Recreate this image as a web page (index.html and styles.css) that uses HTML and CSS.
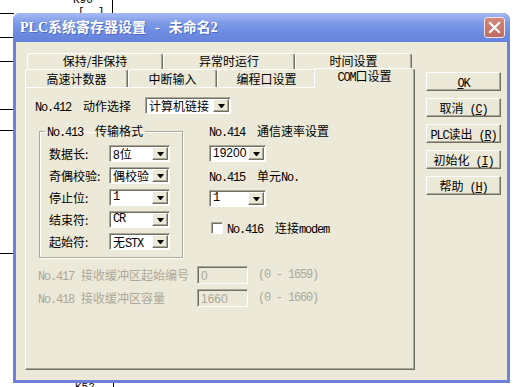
FILE: index.html
```html
<!DOCTYPE html>
<html lang="zh-CN">
<head>
    <meta charset="UTF-8">
    <meta name="viewport" content="width=device-width, initial-scale=1.0">
    <title>PLC系统寄存器设置</title>
    <link rel="stylesheet" href="styles.css">
</head>
<body>
    <!-- 背后的梯形图 -->
    <div class="ladder">
        <span class="k k90">K90</span>
        <span class="k brk">[&nbsp;&nbsp;]</span>
        <i class="hl h1"></i>
        <i class="hl h2"></i>
        <i class="hl h3"></i>
        <i class="hl h4"></i>
        <i class="hl h5"></i>
        <i class="hl h6"></i>
        <i class="vl v1"></i>
        <i class="vl v2"></i>
        <span class="k k52">K52</span>
    </div>

    <div class="dlg">
        <div class="caption">
            <span class="caption-text">PLC系统寄存器设置<span class="dash">-</span>未命名2</span>
            <span class="close">
                <svg width="13" height="13" viewBox="0 0 13 13">
                    <path d="M2 2 L11 11 M11 2 L2 11" stroke="#fff" stroke-width="2.2" stroke-linecap="square"/>
                </svg>
            </span>
        </div>

        <div class="client">
            <div class="tabctl">
                <div class="tabrow back">
                    <div class="tab t1">保持/非保持</div>
                    <div class="tab t2">异常时运行</div>
                    <div class="tab t3">时间设置</div>
                </div>
                <div class="tabrow front">
                    <div class="tab t4">高速计数器</div>
                    <div class="tab t5">中断输入</div>
                    <div class="tab t6">编程口设置</div>
                    <div class="tab t7 sel"><span class="lt">COM</span>口设置</div>
                </div>

                <div class="panel">
                    <div class="line412">
                        <span class="cap"><span class="lt no">No.412</span>动作选择</span>
                        <div class="combo w86"><span class="val">计算机链接</span><b class="arr"></b></div>
                    </div>

                    <div class="mid">
                        <fieldset class="grp">
                            <legend><span class="lt no">No.413</span>传输格式</legend>
                            <div class="frow"><span class="flbl">数据长:</span><div class="combo w61"><span class="val"><span class="sn">8</span>位</span><b class="arr"></b></div></div>
                            <div class="frow"><span class="flbl">奇偶校验:</span><div class="combo w61"><span class="val">偶校验</span><b class="arr"></b></div></div>
                            <div class="frow"><span class="flbl">停止位:</span><div class="combo w61"><span class="val lt">1</span><b class="arr"></b></div></div>
                            <div class="frow"><span class="flbl">结束符:</span><div class="combo w61"><span class="val lt">CR</span><b class="arr"></b></div></div>
                            <div class="frow"><span class="flbl">起始符:</span><div class="combo w61"><span class="val">无<span class="lt">STX</span></span><b class="arr"></b></div></div>
                        </fieldset>

                        <div class="rcol">
                            <div class="rlbl"><span class="lt no">No.414</span>通信速率设置</div>
                            <div class="combo w57"><span class="val sn">19200</span><b class="arr"></b></div>
                            <div class="rlbl"><span class="lt no">No.415</span>单元<span class="lt">No.</span></div>
                            <div class="combo w57"><span class="val lt">1</span><b class="arr"></b></div>
                            <div class="chk"><span class="box"></span><span class="ct"><span class="lt no">No.416</span>连接<span class="lt">modem</span></span></div>
                        </div>
                    </div>

                    <div class="drow first">
                        <span class="dlbl"><span class="lt no sm">No.417</span>接收缓冲区起始编号</span>
                        <span class="tbox"><span class="sn">0</span></span>
                        <span class="rng lt">(0 - 1659)</span>
                    </div>
                    <div class="drow">
                        <span class="dlbl"><span class="lt no sm">No.418</span>接收缓冲区容量</span>
                        <span class="tbox"><span class="sn">1660</span></span>
                        <span class="rng lt">(0 - 1660)</span>
                    </div>
                </div>
            </div>

            <div class="buttons">
                <div class="btn"><span class="lt"><u>O</u>K</span></div>
                <div class="btn">取消<span class="lt">&nbsp;(<u>C</u>)</span></div>
                <div class="btn"><span class="lt">PLC</span>读出<span class="lt">&nbsp;(<u>R</u>)</span></div>
                <div class="btn">初始化<span class="lt">&nbsp;(<u>I</u>)</span></div>
                <div class="btn">帮助<span class="lt">&nbsp;(<u>H</u>)</span></div>
            </div>
        </div>
    </div>
</body>
</html>
```

FILE: styles.css
```css
body{
    margin: 0;
    width: 529px;
    height: 387px;
    position: relative;
    overflow: hidden;
    background: #fff;
    font: 12px "Noto Sans CJK SC", sans-serif;
    line-height: 14px;
    color: #000;
}

/* 西文字母：宋体半角的宽度 6px，行高压小免得撑高行框 */
.lt{
    font-family: "Liberation Mono", monospace;
    font-size: 12px;
    letter-spacing: -1.2px;
    line-height: 10px;
}
.sn{
    font-family: "Liberation Sans", sans-serif;
    font-size: 12px;
    line-height: 10px;
}
.no{
    margin-right: 12px;
}
.no.sm{
    margin-right: 7px;
}

/* 梯形图 */
.ladder .hl{
    position: absolute;
    left: 0;
    width: 14px;
    height: 1px;
    background: #000;
}
.h1{ top: 13px; }
.h2{ top: 37px; }
.h3{ top: 61px; }
.h4{ top: 109px; }
.h5{ top: 130px; }
.h6{ top: 253px; }
.ladder .vl{
    position: absolute;
    width: 1px;
    background: #000;
}
.v1{ left: 112px; top: 0; height: 14px; }
.v2{ left: 113px; top: 383px; height: 4px; }
.ladder .k{
    position: absolute;
    font-family: "Liberation Mono", monospace;
    font-size: 11px;
    line-height: 11px;
}
.k90{ left: 73px; top: -5px; }
.brk{ left: 78px; top: 7px; }
.k52{ left: 75px; top: 382px; }

/* 对话框 */
.dlg{
    position: absolute;
    left: 13px;
    top: 13px;
    width: 497px;
    height: 370px;
    background: #6E80D9;
    border-radius: 7px 7px 0 0;
    display: flex;
    flex-direction: column;
}
.caption{
    height: 29px;
    border-radius: 7px 7px 0 0;
    background: linear-gradient(#A6BBF2, #7D99E7 35%, #6C8AE0 70%, #6682DC);
    display: flex;
    align-items: center;
    justify-content: space-between;
    padding: 0 5px 0 7px;
    color: #fff;
}
.caption-text{
    font-family: "Liberation Serif", "Noto Sans CJK SC", serif;
    font-weight: bold;
    font-size: 14px;
    text-shadow: 1px 1px 0 #4F68C0;
}
.dash{
    margin: 0 9px;
}
.close{
    width: 19px;
    height: 19px;
    border: 1px solid #F2E4E4;
    border-radius: 3px;
    background: linear-gradient(#D48A7E, #C06A60);
    display: flex;
    align-items: center;
    justify-content: center;
}

.client{
    flex: 1;
    margin: 0 3px 3px;
    background: #ECE9D8;
    display: flex;
    padding: 11px 6px 10px 9px;
    gap: 11px;
}

/* 标签页 */
.tabctl{
    width: 390px;
    display: flex;
    flex-direction: column;
}
.tabrow{
    display: flex;
}
.tabrow.back{
    height: 16px;
    padding-left: 2px;
}
.tabrow.front{
    height: 18px;
}
.tab{
    box-sizing: border-box;
    border: 1px solid;
    border-bottom: 0;
    border-color: #fff #716F64 #fff #fff;
    border-radius: 3px 3px 0 0;
    box-shadow: inset -1px 0 #ACA899;
    background: #ECE9D8;
    text-align: center;
    white-space: nowrap;
    line-height: 14px;
}
.tabrow.front .tab{
    line-height: 17px;
}
.t1{ width: 136px; }
.t2{ width: 132px; }
.t3{ width: 117px; }
.t4{ width: 103px; }
.t5{ width: 89px; }
.t6{ width: 99px; }
.t7{ width: 101px; }
.tabrow.front .tab.sel{
    position: relative;
    z-index: 1;
    align-self: flex-start;
    height: 20px;
    margin: -1px 0 -1px -2px;
    line-height: 13px;
}

.panel{
    flex: 1;
    border: 1px solid;
    border-color: #fff #716F64 #716F64 #fff;
    box-shadow: inset -1px -1px #ACA899;
    padding: 9px 0 0 9px;
}

/* 下拉框 */
.combo{
    box-sizing: border-box;
    height: 17px;
    display: flex;
    background: #fff;
    border: 1px solid;
    border-color: #ACA899 #fff #fff #ACA899;
    box-shadow: inset 1px 1px #716F64;
    padding: 1px 1px 1px 2px;
}
.combo .val{
    line-height: 13px;
    padding-left: 1px;
    white-space: nowrap;
}
.combo .arr{
    box-sizing: border-box;
    width: 16px;
    margin-left: auto;
    background: #ECE9D8;
    border: 1px solid;
    border-color: #fff #716F64 #716F64 #fff;
    box-shadow: inset -1px -1px #ACA899;
    display: flex;
    align-items: center;
    justify-content: center;
}
.combo .arr::after{
    content: "";
    width: 1px;
    border-top: 4px solid #000;
    border-left: 3px solid transparent;
    border-right: 3px solid transparent;
}
.w86{ width: 86px; }
.w61{ width: 61px; }
.w57{ width: 57px; }

.line412{
    display: flex;
    align-items: center;
}
.line412 .cap{
    width: 110px;
}

.mid{
    display: flex;
    margin-top: 10px;
}
.grp{
    box-sizing: border-box;
    width: 144px;
    margin: 0 0 0 4px;
    padding: 0 0 7px 9px;
    border: 1px solid #ACA899;
    box-shadow: 1px 1px 0 #fff, inset 1px 1px 0 #fff;
}
.grp legend{
    margin-left: -4px;
    padding: 0 2px;
}
.frow{
    display: flex;
    align-items: center;
    margin-top: 5px;
}
.frow:first-of-type{
    margin-top: 7px;
}
.flbl{
    width: 60px;
    white-space: nowrap;
}

.rcol{
    margin-left: 26px;
}
.rlbl{
    height: 14px;
    margin-bottom: 7px;
    white-space: nowrap;
}
.rcol .combo{
    margin-bottom: 7px;
}
.chk{
    display: flex;
    align-items: center;
    height: 14px;
    margin-top: 14px;
    margin-left: 2px;
    white-space: nowrap;
}
.chk .box{
    box-sizing: border-box;
    width: 12px;
    height: 12px;
    margin-right: 4px;
    background: #fff;
    border: 1px solid;
    border-color: #ACA899 #fff #fff #ACA899;
    box-shadow: inset 1px 1px #716F64;
}

/* 不可用的输入行 */
.drow{
    display: flex;
    align-items: center;
    color: #ACA899;
    margin: 5px 0 0 3px;
}
.drow.first{
    margin-top: 8px;
}
.dlbl{
    width: 159px;
    white-space: nowrap;
}
.tbox{
    box-sizing: border-box;
    width: 51px;
    height: 18px;
    border: 1px solid;
    border-color: #ACA899 #fff #fff #ACA899;
    box-shadow: inset 1px 1px #716F64;
    padding-left: 3px;
    line-height: 16px;
}
.rng{
    margin-left: 10px;
}

/* 右边的按钮 */
.buttons{
    width: 75px;
    margin-top: 19px;
    display: flex;
    flex-direction: column;
    gap: 7px;
}
.btn{
    box-sizing: border-box;
    height: 19px;
    border: 1px solid;
    border-color: #fff #716F64 #716F64 #fff;
    box-shadow: inset -1px -1px #ACA899;
    text-align: center;
    line-height: 17px;
    white-space: nowrap;
}
```
